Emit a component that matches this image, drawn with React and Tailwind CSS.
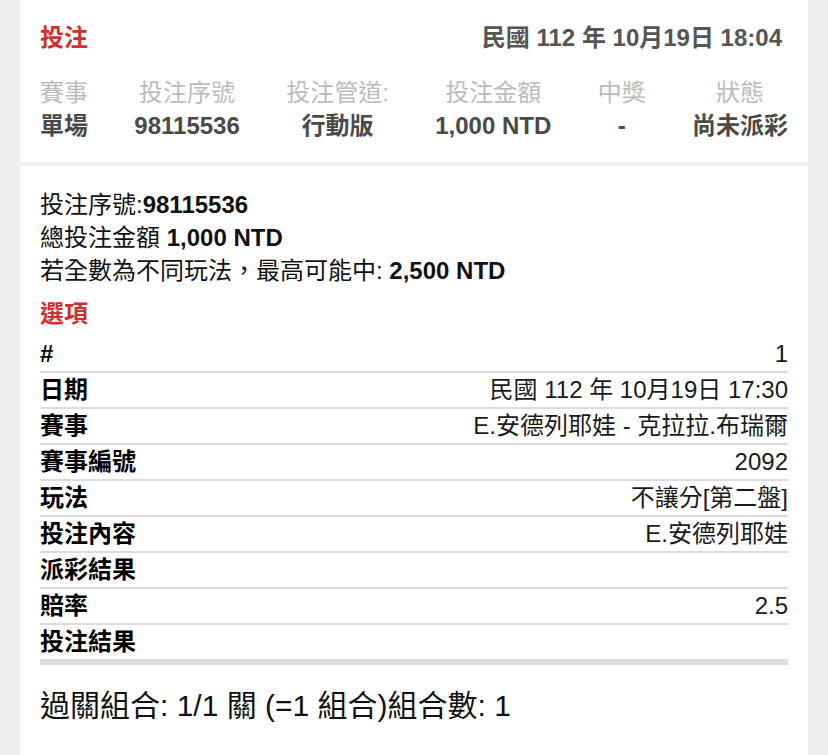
const summary = [
  { label: '賽事', value: '單場' },
  { label: '投注序號', value: '98115536' },
  { label: '投注管道:', value: '行動版' },
  { label: '投注金額', value: '1,000 NTD' },
  { label: '中獎', value: '-' },
  { label: '狀態', value: '尚未派彩' },
]

const rows = [
  { label: '#', value: '1' },
  { label: '日期', value: '民國 112 年 10月19日 17:30' },
  { label: '賽事', value: 'E.安德列耶娃 - 克拉拉.布瑞爾' },
  { label: '賽事編號', value: '2092' },
  { label: '玩法', value: '不讓分[第二盤]' },
  { label: '投注內容', value: 'E.安德列耶娃' },
  { label: '派彩結果', value: '' },
  { label: '賠率', value: '2.5' },
  { label: '投注結果', value: '' },
]

export default function App() {
  return (
    <div
      className="min-h-screen bg-[#efefef] px-5"
      style={{ fontFamily: '"Liberation Sans", "Noto Sans CJK TC", sans-serif' }}
    >
      {/* Top summary card */}
      <div className="bg-white px-5 pt-[23px] pb-5">
        <div className="flex items-center justify-between text-[24px] leading-[30px] font-bold">
          <span className="text-[#d0302b]">投注</span>
          <span className="text-[#555555] mr-[6px]">民國 112 年 10月19日 18:04</span>
        </div>
        <div className="mt-[23px] flex justify-between text-[24px] leading-[33px]">
          {summary.map((s) => (
            <div key={s.label} className="flex flex-col items-center">
              <span className="text-[#bcbcbc]">{s.label}</span>
              <span className="font-bold text-[#4a4a4a]">{s.value}</span>
            </div>
          ))}
        </div>
      </div>

      {/* Detail card */}
      <div className="mt-1 bg-white px-5 pt-[22px] pb-10 text-[#111111]">
        <div className="text-[24px] leading-[33px]">
          <div>投注序號:<b>98115536</b></div>
          <div>總投注金額 <b>1,000 NTD</b></div>
          <div>若全數為不同玩法，最高可能中: <b>2,500 NTD</b></div>
        </div>
        <div className="mt-[10px] text-[24px] leading-[33px] font-bold text-[#d0302b]">選項</div>

        <div className="mt-[7px]">
          {rows.map((r, i) => (
            <div
              key={r.label}
              className={`flex items-center justify-between text-[24px] ${
                i === rows.length - 1 ? 'h-[40px] border-b-[6px] border-[#dcdcdc]' : 'h-[36px] border-b-2 border-[#dcdcdc]'
              }`}
            >
              <span className="font-bold text-black">{r.label}</span>
              <span className="text-[#1a1a1a]">{r.value}</span>
            </div>
          ))}
        </div>

        <div className="mt-[21px] text-[30px] leading-[40px] text-[#111111]">
          過關組合: 1/1 關 (=1 組合)組合數: 1
        </div>
      </div>
    </div>
  )
}
